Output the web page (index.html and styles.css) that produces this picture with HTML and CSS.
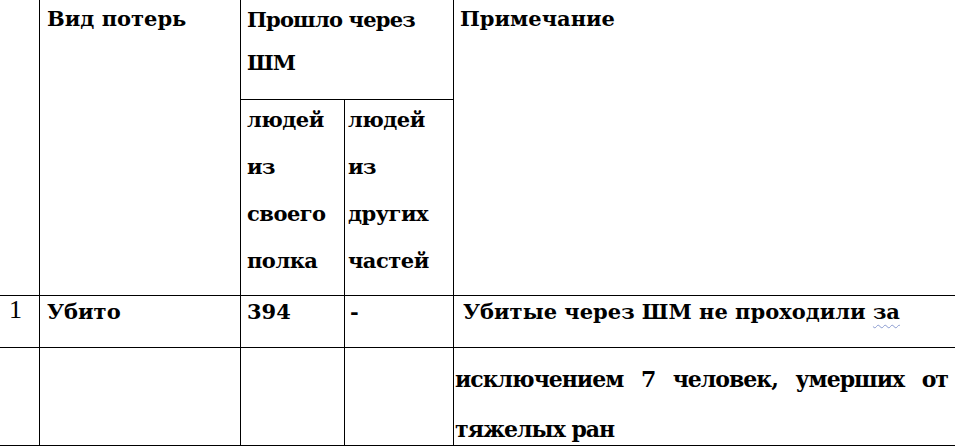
FILE: index.html
```html
<!DOCTYPE html>
<html lang="ru">
<head>
<meta charset="utf-8">
<title>Таблица потерь</title>
<link rel="stylesheet" href="styles.css">
</head>
<body>
<div class="sheet">
  <div class="cell c0 span-rows"></div>
  <div class="cell c1 span-rows head">Вид потерь</div>
  <div class="cell c23 head">Прошло через<br>ШМ</div>
  <div class="cell c4 span-rows head">Примечание</div>
  <div class="cell c2 sub">людей<br>из<br>своего<br>полка</div>
  <div class="cell c3 sub">людей<br>из<br>других<br>частей</div>

  <div class="cell c0 row num">1</div>
  <div class="cell c1 row">Убито</div>
  <div class="cell c2 row">394</div>
  <div class="cell c3 row dash">-</div>
  <div class="cell c4 row note">Убитые через ШМ не проходили <span class="spell">за</span></div>

  <div class="cell c0 last"></div>
  <div class="cell c1 last"></div>
  <div class="cell c2 last"></div>
  <div class="cell c3 last"></div>
  <div class="cell c4 last cont">
    <div class="just">исключением 7 человек, умерших от</div>
    <div>тяжелых ран</div>
  </div>
</div>
</body>
</html>
```
FILE: styles.css
```css
html, body {
  margin: 0;
  padding: 0;
  background: #ffffff;
}

body {
  overflow: hidden;
  height: 447px;
}

.sheet {
  display: grid;
  grid-template-columns: 40px 201px 104px 109px 520px;
  grid-template-rows: 104px 196px 52px 98px;
  margin-top: -5px;
  border-top: 1px solid #000;
  width: max-content;
  color: #000000;
}

.cell {
  box-sizing: border-box;
  border-right: 1px solid #000;
  border-bottom: 1px solid #000;
  white-space: nowrap;
  font-family: "DejaVu Serif", serif;
  font-weight: bold;
  font-size: 21px;
}

.span-rows { grid-row: span 2; }
.c23 { grid-column: span 2; }

.head {
  line-height: 43px;
  padding-top: 1px;
  padding-left: 6px;
}
.c1.head { padding-left: 7px; }
.c23.head { padding-top: 2px; letter-spacing: -0.8px; }

.sub {
  line-height: 47px;
}
.sub.c2 { padding-left: 6px; letter-spacing: -0.5px; }
.sub.c3 { padding-left: 3px; letter-spacing: -0.5px; }
.sub::before {
  content: "";
  display: block;
  margin-top: -4px;
}

.row {
  line-height: 28px;
  padding-top: 2px;
  padding-left: 6px;
}
.c1.row { padding-left: 7px; }
.num {
  font-family: "Liberation Serif", serif;
  font-weight: normal;
  font-size: 26px;
  padding-top: 0;
  padding-left: 9px;
}
.dash { padding-left: 5px; }
.note { padding-left: 9px; }

.spell {
  text-decoration: underline wavy #8a9bd0;
  text-decoration-thickness: 1px;
  text-underline-offset: 5px;
}

.cont {
  font-size: 22px;
  letter-spacing: -1px;
  line-height: 50px;
  padding-top: 6px;
  padding-left: 1px;
  padding-right: 25px;
}
.just {
  text-align: justify;
  text-align-last: justify;
  white-space: normal;
}
```
